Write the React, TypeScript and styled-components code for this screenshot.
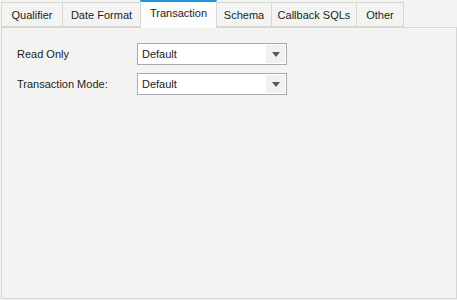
import React, { useState } from 'react'
import styled, { createGlobalStyle } from 'styled-components'

const GlobalStyle = createGlobalStyle`
  html, body {
    margin: 0;
    padding: 0;
    background: #f3f4f1;
  }
  body {
    font-family: "Liberation Sans", Arial, sans-serif;
    font-size: 11px;
    color: #1c1c1c;
  }
`

const Frame = styled.div`
  width: 457px;
  height: 300px;
  box-sizing: border-box;
  padding: 0 0 1px 1px;
  display: flex;
  flex-direction: column;
  background: #f3f4f1;
`

const TabBar = styled.div`
  display: flex;
  align-items: flex-end;
  height: 27px;
  position: relative;
  z-index: 1;
`

const Tab = styled.button<{ $active?: boolean; $width: number }>`
  box-sizing: border-box;
  width: ${({ $width }) => $width}px;
  height: ${({ $active }) => ($active ? '28px' : '25px')};
  margin-bottom: ${({ $active }) => ($active ? '-1px' : '0')};
  margin-left: -1px;
  padding: ${({ $active }) => ($active ? '0 0 4px' : '0')};
  white-space: nowrap;
  font: inherit;
  color: inherit;
  background: ${({ $active }) => ($active ? '#fbfcfb' : '#f3f4f1')};
  border: 1px solid #d6d7d4;
  border-top: ${({ $active }) => ($active ? '2px solid #1e93dc' : '1px solid #d6d7d4')};
  border-bottom: ${({ $active }) => ($active ? 'none' : '1px solid #d6d7d4')};
  cursor: pointer;
  &:first-child {
    margin-left: 0;
  }
`

const Panel = styled.div`
  flex: 1;
  border: 1px solid #d6d7d4;
  padding: 15px 0 0 15px;
  display: flex;
  flex-direction: column;
  gap: 8px;
`

const Row = styled.div`
  display: flex;
  align-items: center;
  height: 22px;
`

const Label = styled.label`
  width: 120px;
`

const Select = styled.div`
  box-sizing: border-box;
  width: 150px;
  height: 22px;
  border: 1px solid #a9a9a9;
  background: #ffffff;
  display: flex;
  align-items: stretch;
  padding: 1px;
`

const Value = styled.span`
  flex: 1;
  padding-left: 3px;
  display: flex;
  align-items: center;
`

const ArrowButton = styled.span`
  width: 19px;
  background: #f1f0f3;
  display: flex;
  align-items: center;
  justify-content: center;
`

const Arrow = () => (
  <svg width="8" height="5" viewBox="0 0 8 5">
    <path d="M0 0h8L4 5z" fill="#595959" />
  </svg>
)

const tabs = [
  { label: 'Qualifier', width: 62 },
  { label: 'Date Format', width: 79 },
  { label: 'Transaction', width: 77 },
  { label: 'Schema', width: 56 },
  { label: 'Callback SQLs', width: 86 },
  { label: 'Other', width: 48 },
]

export default function App() {
  const [active, setActive] = useState('Transaction')

  return (
    <>
      <GlobalStyle />
      <Frame>
        <TabBar>
          {tabs.map(t => (
            <Tab
              key={t.label}
              $width={t.width}
              $active={t.label === active}
              onClick={() => setActive(t.label)}
            >
              {t.label}
            </Tab>
          ))}
        </TabBar>
        <Panel>
          <Row>
            <Label>Read Only</Label>
            <Select>
              <Value>Default</Value>
              <ArrowButton><Arrow /></ArrowButton>
            </Select>
          </Row>
          <Row>
            <Label>Transaction Mode:</Label>
            <Select>
              <Value>Default</Value>
              <ArrowButton><Arrow /></ArrowButton>
            </Select>
          </Row>
        </Panel>
      </Frame>
    </>
  )
}
